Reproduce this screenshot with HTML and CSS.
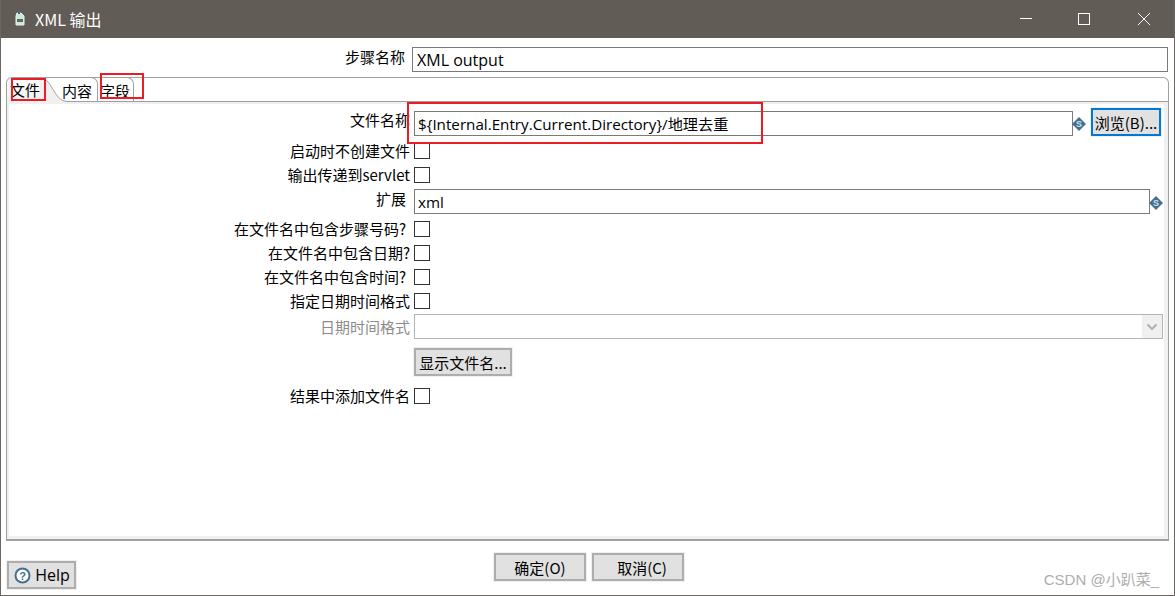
FILE: index.html
```html
<!DOCTYPE html>
<html lang="zh">

<head>
  <meta charset="utf-8">
  <title>XML 输出</title>
  <link rel="stylesheet" href="styles.css">
</head>

<body>
  <div class="window">

    <!-- Title bar -->
    <div class="titlebar">
      <svg class="app-icon" width="16" height="18" viewBox="0 0 16 18">
        <path d="M5 3h4l3 3v9H4V6z" fill="#cfe6d8" stroke="#e8f2ec" />
        <rect x="5" y="9" width="6" height="3" fill="#4f6f62" />
        <rect x="6" y="2" width="2" height="2" fill="#2e6a86" />
      </svg>
      <span class="title-text">XML 输出</span>
      <div class="win-buttons">
        <svg width="14" height="14" viewBox="0 0 14 14">
          <path d="M1 6.5h12" stroke="#fff" fill="none" />
        </svg>
        <svg width="14" height="14" viewBox="0 0 14 14">
          <rect x="0.5" y="1.5" width="11" height="11" stroke="#fff" fill="none" />
        </svg>
        <svg width="14" height="14" viewBox="0 0 14 14">
          <path d="M1 1l12 12M13 1L1 13" stroke="#fff" fill="none" />
        </svg>
      </div>
    </div>

    <!-- Step name -->
    <div class="step-row">
      <label class="step-label">步骤名称</label>
      <div class="text-input step-input">XML output</div>
    </div>

    <!-- Tabs -->
    <div class="tab-folder">
      <div class="tab-bar">
        <div class="tab tab-active">文件</div>
        <svg class="tab-curve" width="28" height="24" viewBox="0 0 28 24">
          <path d="M0 0.5C8 0.5 10 7 14 13C18 20 22 23.5 28 23.5V24H0z" fill="#f0f0f0" />
          <path d="M0 0.5C8 0.5 10 7 14 13C18 20 22 23.5 28 23.5" fill="none" stroke="#a0a0a0" />
        </svg>
        <div class="tab tab-mid">内容</div>
        <div class="tab tab-last">字段</div>
        <div class="tab-rest"></div>
      </div>

      <div class="tab-panel">
        <div class="form">
          <div class="row row-file">
            <label class="row-label up">文件名称</label>
            <div class="text-input grow">${Internal.Entry.Current.Directory}/地理去重</div>
            <svg class="var-icon" width="14" height="14" viewBox="0 0 14 14">
              <path d="M7 0l7 7-7 7-7-7z" fill="#44708f" />
              <text x="7" y="10" text-anchor="middle" class="var-s">S</text>
            </svg>
            <button class="btn btn-focus">浏览(B)...</button>
          </div>

          <div class="row row-check">
            <label class="row-label">启动时不创建文件</label>
            <span class="check"></span>
          </div>
          <div class="row row-check">
            <label class="row-label">输出传递到servlet</label>
            <span class="check"></span>
          </div>

          <div class="row row-ext">
            <label class="row-label short up">扩展</label>
            <div class="text-input grow">xml</div>
            <svg class="var-icon" width="14" height="14" viewBox="0 0 14 14">
              <path d="M7 0l7 7-7 7-7-7z" fill="#44708f" />
              <text x="7" y="10" text-anchor="middle" class="var-s">S</text>
            </svg>
          </div>

          <div class="row row-check">
            <label class="row-label short">在文件名中包含步骤号码?</label>
            <span class="check"></span>
          </div>
          <div class="row row-check">
            <label class="row-label">在文件名中包含日期?</label>
            <span class="check"></span>
          </div>
          <div class="row row-check">
            <label class="row-label short">在文件名中包含时间?</label>
            <span class="check"></span>
          </div>
          <div class="row row-check">
            <label class="row-label">指定日期时间格式</label>
            <span class="check"></span>
          </div>

          <div class="row row-date">
            <label class="row-label disabled">日期时间格式</label>
            <div class="select-box">
              <span class="select-arrow">
                <svg width="10" height="6" viewBox="0 0 10 6">
                  <path d="M0.5 0.5L5 5l4.5-4.5" fill="none" stroke="#b0b0b0" stroke-width="2" />
                </svg>
              </span>
            </div>
          </div>

          <div class="row row-show">
            <button class="btn btn-show">显示文件名...</button>
          </div>

          <div class="row row-check">
            <label class="row-label">结果中添加文件名</label>
            <span class="check"></span>
          </div>
        </div>
      </div>
    </div>

    <!-- Footer -->
    <div class="footer">
      <button class="btn btn-help">
        <svg width="17" height="17" viewBox="0 0 17 17">
          <circle cx="8.5" cy="8.5" r="7" fill="#fff" stroke="#44708f" stroke-width="2" />
          <text x="8.5" y="12.5" text-anchor="middle" class="help-q">?</text>
        </svg>
        Help
      </button>
      <div class="footer-main">
        <button class="btn btn-main">确定(O)</button>
        <button class="btn btn-main btn-cancel">取消(C)</button>
      </div>
      <span class="watermark">CSDN @小趴菜_</span>
    </div>

    <!-- Red annotations drawn over the screenshot -->
    <span class="mark mark-tab1"></span>
    <span class="mark mark-tab3"></span>
    <span class="mark mark-input"></span>
  </div>
</body>

</html>
```

FILE: styles.css
```css
* {
  box-sizing: border-box;
}

html,
body {
  margin: 0;
  padding: 0;
  background: #fff;
}

body {
  font-family: "Noto Sans CJK SC", "Open Sans", sans-serif;
  font-size: 15px;
  color: #000;
}

.window {
  position: relative;
  width: 1175px;
  height: 596px;
  border: 1px solid #6b6763;
  border-top: 0;
  overflow: hidden;
}

/* Title bar */
.titlebar {
  display: flex;
  align-items: center;
  height: 38px;
  margin: 0 -1px;
  padding-left: 12px;
  background: #625c57;
  color: #fff;
}

.app-icon {
  margin-right: 7px;
}

.title-text {
  font-size: 16px;
}

.win-buttons {
  display: flex;
  align-items: center;
  gap: 45px;
  margin-left: auto;
  padding-right: 24px;
}

/* Step name row */
.step-row {
  display: flex;
  align-items: center;
  height: 25px;
  margin-top: 9px;
}

.step-label {
  width: 404px;
  text-align: right;
  margin-top: -6px;
}

.text-input {
  height: 25px;
  border: 1px solid #7a7a7a;
  background: #fff;
  padding: 0 3px;
  font-family: "Open Sans", "Noto Sans CJK SC", sans-serif;
  font-size: 15.2px;
  line-height: 24px;
  white-space: nowrap;
}

.step-input {
  width: 756px;
  margin-left: 7px;
  padding-left: 4px;
  font-size: 16px;
}

.grow {
  flex: 1;
}

/* Tabs */
.tab-folder {
  width: 1163px;
  height: 464px;
  margin: 5px 0 0 5px;
  border: 1px solid #a0a0a0;
  border-bottom: 2px solid #a0a0a0;
  border-radius: 6px 6px 0 0;
  display: flex;
  flex-direction: column;
}

.tab-bar {
  display: flex;
  height: 24px;
  flex: none;
}

.tab {
  height: 24px;
  padding-top: 1px;
  line-height: 22px;
  white-space: nowrap;
}

.tab-active {
  width: 33px;
  padding-left: 3px;
  background: linear-gradient(#fff, #f0f0f0);
  border-radius: 6px 0 0 0;
}

.tab-curve {
  flex: none;
}

.tab-mid,
.tab-last {
  height: 25px;
  margin-top: -1px;
  padding-top: 2px;
  border-top: 1px solid #a0a0a0;
  border-right: 1px solid #a0a0a0;
  border-bottom: 1px solid #a0a0a0;
  border-radius: 0 7px 0 0;
}

.tab-mid {
  width: 30px;
  text-indent: -6px;
}

.tab-last {
  width: 36px;
  padding-left: 2px;
}

.tab-rest {
  flex: 1;
  border-bottom: 1px solid #a0a0a0;
}

.tab-panel {
  flex: 1;
  background: #fff;
  border: 2px solid #f0f0f0;
  border-width: 2px 4px 3px 2px;
}

.form {
  padding: 4px 0 0 0;
  margin-right: -4px;
}

.row {
  display: flex;
  align-items: center;
}

.row-label {
  width: 401px;
  margin-right: 4px;
  text-align: right;
  white-space: nowrap;
  line-height: 20px;
  flex: none;
}

.row-label.short {
  width: 397px;
  margin-right: 8px;
}

.row-label.up {
  margin-top: -5px;
}

.row-label.disabled {
  color: #8c8c8c;
}

.row-file {
  height: 28px;
  padding-right: 4px;
}

.row-file .text-input {
  margin-top: 3px;
}

.row-check {
  height: 24px;
}

.row-file+.row-check {
  margin-top: 3px;
}

.row-ext {
  height: 25px;
  margin-top: 2px;
  margin-bottom: 3px;
  padding-right: 5px;
}

.var-icon {
  flex: none;
  margin: 3px 0 0 -1px;
}

.var-s {
  font-family: "Liberation Sans", sans-serif;
  font-size: 9px;
  font-weight: bold;
  fill: #cfe0ea;
}

.help-q {
  font-family: "Liberation Sans", sans-serif;
  font-size: 11px;
  font-weight: bold;
  fill: #44708f;
}

.check {
  width: 16px;
  height: 16px;
  border: 1px solid #333;
  background: #fff;
  flex: none;
}

.row-date {
  height: 25px;
  margin-top: 1px;
}

.select-box {
  position: relative;
  width: 749px;
  height: 25px;
  border: 1px solid #b4b4b4;
  background: #fff;
}

.select-arrow {
  position: absolute;
  right: 0;
  top: 0;
  width: 20px;
  height: 23px;
  background: #f0f0f0;
  display: flex;
  align-items: center;
  justify-content: center;
}

.row-show {
  height: 28px;
  margin-top: 9px;
  margin-bottom: 8px;
  padding-left: 405px;
}

.btn {
  height: 28px;
  border: 2px solid #adadad;
  outline: 1px solid #f0f0f0;
  background: #e1e1e1;
  font-family: "Noto Sans CJK SC", "Open Sans", sans-serif;
  font-size: 15px;
  color: #000;
  padding: 0;
  border-radius: 0;
  white-space: nowrap;
}

.btn-focus {
  width: 70px;
  margin-left: 5px;
  margin-right: 3px;
  border-color: #0078d7;
  flex: none;
}

.btn-show {
  width: 98px;
}

/* Footer */
.footer {
  position: relative;
  height: 55px;
}

.btn-main {
  width: 92px;
}

.btn-cancel {
  padding-left: 8px;
}

.footer-main {
  position: absolute;
  left: 493px;
  top: 12px;
  display: flex;
  gap: 6px;
}

.btn-help {
  position: absolute;
  left: 6px;
  top: 20px;
  width: 69px;
  display: flex;
  align-items: center;
  justify-content: center;
  gap: 4px;
  padding-left: 1px;
  font-family: "Open Sans", sans-serif;
  font-size: 16px;
}

.watermark {
  position: absolute;
  right: 15px;
  top: 27px;
  font-family: "Liberation Sans", "Noto Sans CJK SC", sans-serif;
  font-size: 15px;
  color: #adadad;
}

/* Red annotation frames */
.mark {
  position: absolute;
  border: 2px solid #ec1c24;
}

.mark-tab1 {
  left: 10px;
  top: 78px;
  width: 35px;
  height: 23px;
}

.mark-tab3 {
  left: 99px;
  top: 73px;
  width: 44px;
  height: 26px;
}

.mark-input {
  left: 406px;
  top: 102px;
  width: 356px;
  height: 42px;
}
```
